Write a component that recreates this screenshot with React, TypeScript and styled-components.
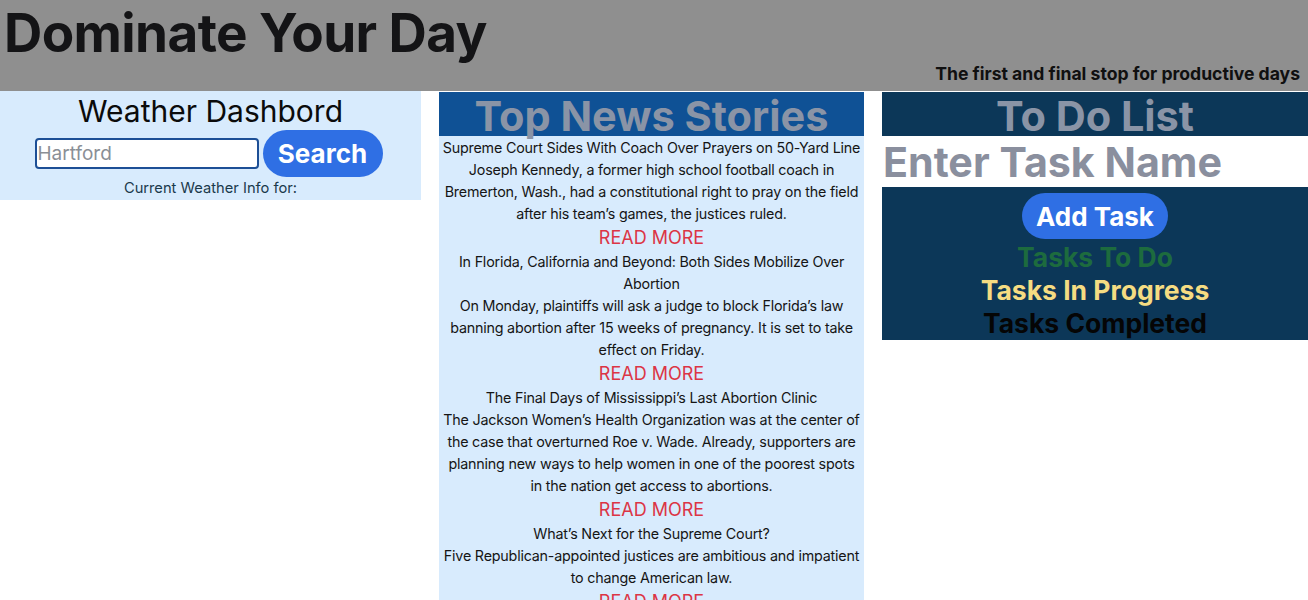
import React from "react";
import styled, { createGlobalStyle } from "styled-components";

const GlobalStyle = createGlobalStyle`
  body {
    margin: 0;
    font-family: Inter, "Noto Sans", "Liberation Sans", sans-serif;
    color: #212529;
    background: #fff;
  }
  * { box-sizing: border-box; }
`;

const Header = styled.header`
  background: #8f8f8f;
  height: 91px;
  display: flex;
  flex-direction: column;
  justify-content: space-between;
  padding: 0 8px 8px 4px;
`;

const Title = styled.h1`
  margin: 3px 0 0 0;
  font-size: 53px;
  font-weight: 700;
  line-height: 60px;
  letter-spacing: -0.6px;
  color: #141416;
`;

const Tagline = styled.p`
  margin: 0;
  align-self: flex-end;
  font-size: 17.6px;
  font-weight: 700;
  line-height: 22px;
  color: #101010;
`;

const Columns = styled.main`
  display: grid;
  grid-template-columns: 421px 425px 1fr;
  column-gap: 18px;
  align-items: start;
`;

const WeatherPanel = styled.section`
  background: #d8ebfd;
  display: flex;
  flex-direction: column;
  align-items: center;
  padding: 1px 0 2px;
`;

const WeatherTitle = styled.h2`
  margin: 0;
  font-size: 30px;
  font-weight: 400;
  line-height: 38px;
  color: #0b0b0b;
`;

const SearchRow = styled.form`
  display: flex;
  align-items: center;
  gap: 4px;
  margin-right: 4px;
`;

const CityInput = styled.input`
  width: 224px;
  height: 31px;
  border: 2px solid #1d4f96;
  border-radius: 4px;
  padding: 0 1px;
  font-family: inherit;
  font-size: 19px;
  background: #fff;
  &::placeholder {
    color: #8a8f96;
  }
`;

const PillButton = styled.button<{ $width: number }>`
  width: ${({ $width }) => $width}px;
  height: 47px;
  border: none;
  border-radius: 24px;
  background: #2f6fe4;
  color: #fff;
  font-family: inherit;
  font-size: 26px;
  font-weight: 700;
  cursor: pointer;
`;

const WeatherInfo = styled.p`
  margin: 1px 0 0;
  font-size: 14.7px;
  line-height: 20px;
  color: #1b3a4c;
`;

const PanelHeading = styled.h2<{ $bg: string }>`
  margin: 0;
  height: 44px;
  background: ${({ $bg }) => $bg};
  color: #8a94a6;
  font-size: 41.5px;
  font-weight: 700;
  line-height: 48px;
  text-align: center;
  white-space: nowrap;
`;

const NewsPanel = styled.section`
  background: #d8ebfd;
  margin-top: 1px;
`;

const NewsList = styled.div`
  text-align: center;
  padding: 1px 3px 0;
`;

const Story = styled.article`
  font-size: 14.3px;
  letter-spacing: -0.2px;
  line-height: 22px;
  color: #151515;
`;

const StoryTitle = styled.div``;

const StoryText = styled.div``;

const ReadMore = styled.a`
  display: block;
  font-size: 18px;
  letter-spacing: 0;
  line-height: 24px;
  padding: 1px 0;
  color: #dc3545;
  text-decoration: none;
`;

const TodoPanel = styled.section`
  margin-top: 1px;
`;

const TaskInput = styled.input`
  display: block;
  width: 100%;
  height: 51px;
  border: none;
  outline: none;
  padding: 0 0 0 1px;
  font-family: inherit;
  font-size: 41.2px;
  font-weight: 700;
  background: #fff;
  &::placeholder {
    color: #8a8f9e;
  }
`;

const TodoBody = styled.div`
  background: #0c3758;
  display: flex;
  flex-direction: column;
  align-items: center;
  padding: 6px 0 0;
  height: 153px;
`;

const TaskGroup = styled.h3<{ $color: string }>`
  margin: 0;
  font-size: 26.5px;
  font-weight: 700;
  line-height: 33px;
  color: ${({ $color }) => $color};
  &:first-of-type {
    margin-top: 2px;
  }
`;

const stories = [
  {
    title: "Supreme Court Sides With Coach Over Prayers on 50-Yard Line",
    text: "Joseph Kennedy, a former high school football coach in Bremerton, Wash., had a constitutional right to pray on the field after his team\u2019s games, the justices ruled.",
  },
  {
    title: "In Florida, California and Beyond: Both Sides Mobilize Over Abortion",
    text: "On Monday, plaintiffs will ask a judge to block Florida\u2019s law banning abortion after 15 weeks of pregnancy. It is set to take effect on Friday.",
  },
  {
    title: "The Final Days of Mississippi\u2019s Last Abortion Clinic",
    text: "The Jackson Women\u2019s Health Organization was at the center of the case that overturned Roe v. Wade. Already, supporters are planning new ways to help women in one of the poorest spots in the nation get access to abortions.",
  },
  {
    title: "What\u2019s Next for the Supreme Court?",
    text: "Five Republican-appointed justices are ambitious and impatient to change American law.",
  },
];

const App: React.FC = () => {
  return (
    <>
      <GlobalStyle />
      <Header>
        <Title>Dominate Your Day</Title>
        <Tagline>The first and final stop for productive days</Tagline>
      </Header>
      <Columns>
        <WeatherPanel>
          <WeatherTitle>Weather Dashbord</WeatherTitle>
          <SearchRow onSubmit={(e) => e.preventDefault()}>
            <CityInput placeholder="Hartford" />
            <PillButton $width={120}>Search</PillButton>
          </SearchRow>
          <WeatherInfo>Current Weather Info for:</WeatherInfo>
        </WeatherPanel>

        <NewsPanel>
          <PanelHeading $bg="#0f5195">Top News Stories</PanelHeading>
          <NewsList>
            {stories.map((s) => (
              <Story key={s.title}>
                <StoryTitle>{s.title}</StoryTitle>
                <StoryText>{s.text}</StoryText>
                <ReadMore href="#">READ MORE</ReadMore>
              </Story>
            ))}
          </NewsList>
        </NewsPanel>

        <TodoPanel>
          <PanelHeading $bg="#0c3758">To Do List</PanelHeading>
          <TaskInput placeholder="Enter Task Name" />
          <TodoBody>
            <PillButton $width={146}>Add Task</PillButton>
            <TaskGroup $color="#1d6b3e">Tasks To Do</TaskGroup>
            <TaskGroup $color="#f5dc82">Tasks In Progress</TaskGroup>
            <TaskGroup $color="#050505">Tasks Completed</TaskGroup>
          </TodoBody>
        </TodoPanel>
      </Columns>
    </>
  );
};

export default App;
